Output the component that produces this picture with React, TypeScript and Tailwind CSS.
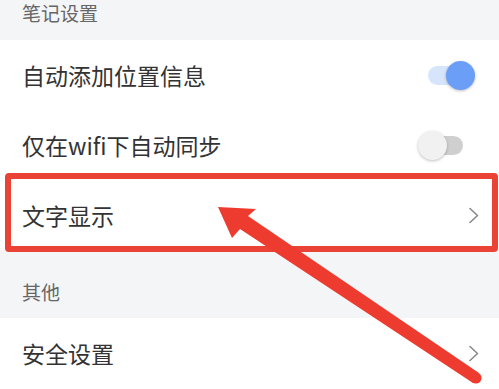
import React from 'react';

const FONT = { fontFamily: '"Noto Sans CJK SC", "Noto Sans", sans-serif' };

const Toggle: React.FC<{ on: boolean }> = ({ on }) => (
  <div className="relative w-[57px] h-[29px] shrink-0">
    <div
      className={`absolute left-[10px] top-[5px] w-[35px] h-[19px] rounded-full ${
        on ? 'bg-[#d6e4fc]' : 'bg-[#cfcfcf]'
      }`}
    />
    <div
      className={`absolute top-0 w-[29px] h-[29px] rounded-full shadow-[0_1px_3px_rgba(0,0,0,0.25)] ${
        on ? 'left-[28px] bg-[#6b9ef6]' : 'left-0 bg-[#f1f1f1]'
      }`}
    />
  </div>
);

const Chevron = () => (
  <svg width="12" height="17" viewBox="0 0 12 17" className="shrink-0">
    <path d="M2 1.5 L9.5 8.5 L2 15.5" fill="none" stroke="#8a8a8a" strokeWidth="1.6" strokeLinecap="round" strokeLinejoin="round" />
  </svg>
);

const Row: React.FC<{ label: string; right: React.ReactNode; pr: string }> = ({ label, right, pr }) => (
  <div className={`h-[70px] bg-white flex items-center justify-between pl-[22px] ${pr}`}>
    <span className="text-[23px] leading-none text-[#333333]">{label}</span>
    {right}
  </div>
);

export default function App() {
  return (
    <div className="relative w-[499px] h-[389px] overflow-hidden bg-white" style={FONT}>
      <div className="h-[40px] bg-[#f4f5f7] flex items-start pt-[3px] pl-[22px]">
        <span className="text-[19px] leading-[20px] text-[#666666]">笔记设置</span>
      </div>
      <Row label="自动添加位置信息" pr="pr-[24px]" right={<Toggle on />} />
      <Row label="仅在wifi下自动同步" pr="pr-[24px]" right={<Toggle on={false} />} />
      <Row label="文字显示" pr="pr-[19px]" right={<Chevron />} />
      <div className="h-[68px] bg-[#f4f5f7] flex items-end pb-[16px] pl-[22px]">
        <span className="text-[19px] leading-[20px] text-[#666666]">其他</span>
      </div>
      <Row label="安全设置" pr="pr-[19px]" right={<Chevron />} />

      {/* annotation: red box + arrow */}
      <div className="absolute left-[5px] top-[173px] w-[493px] h-[79px] border-[6px] border-[#ea4335] rounded-[4px]" />
      <svg className="absolute inset-0" width="499" height="389" viewBox="0 0 499 389">
        <polygon
          points="218,207 256,209 248,216 479,373 473,383 240,229 232,238"
          fill="#ee3b30"
          strokeLinejoin="round"
        />
        <circle cx="476" cy="378" r="5.6" fill="#ee3b30" />
      </svg>
    </div>
  );
}
